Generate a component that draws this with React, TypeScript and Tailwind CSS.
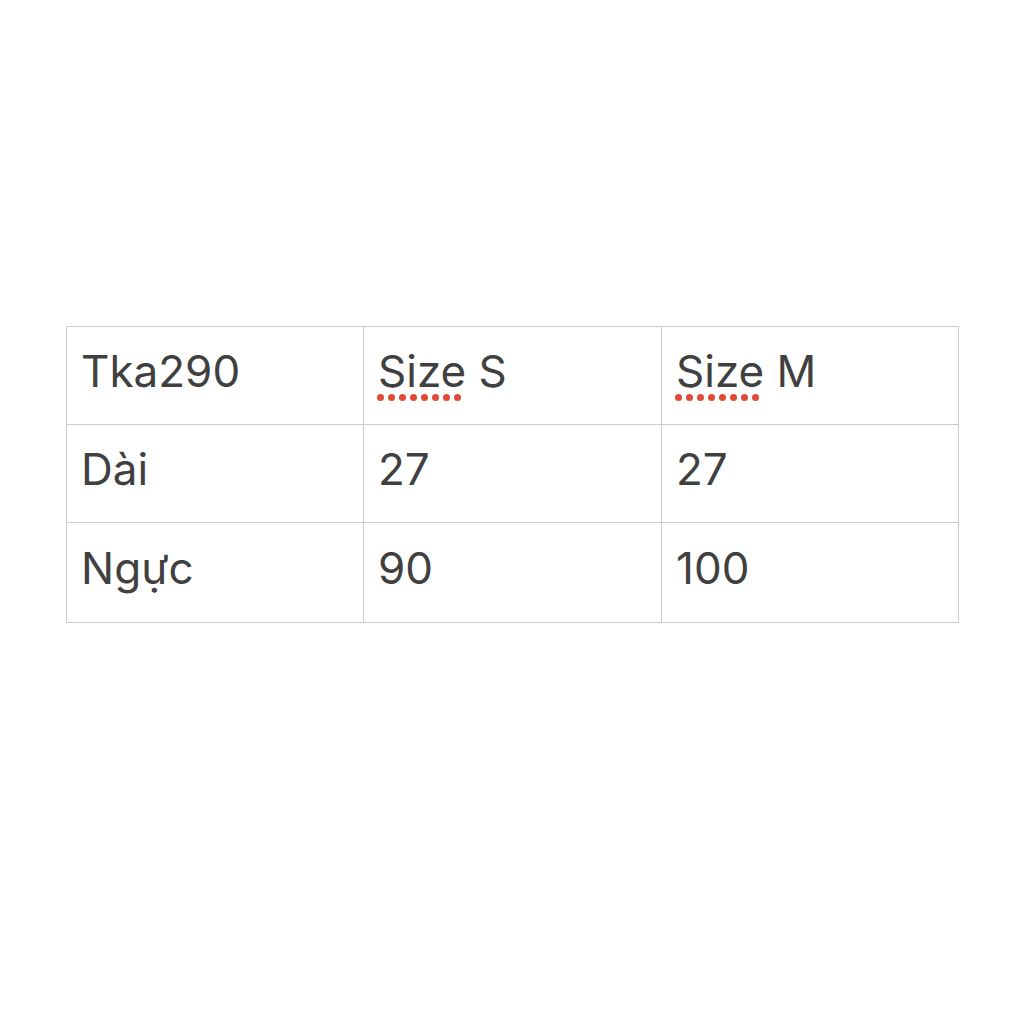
import React from "react";

function Spell({ children }: { children: React.ReactNode }) {
  return (
    <span className="relative inline-block">
      {children}
      <span className="absolute left-[-1px] top-[calc(100%+1px)] flex gap-[4px]">
        {Array.from({ length: 8 }).map((_, i) => (
          <span key={i} className="w-[7px] h-[7px] shrink-0 rounded-full bg-[#e04b38]" />
        ))}
      </span>
    </span>
  );
}

const rows: React.ReactNode[][] = [
  ["Tka290", <><Spell>Size</Spell> S</>, <><Spell>Size</Spell> M</>],
  ["Dài", "27", "27"],
  ["Ngực", "90", "100"],
];

export default function App() {
  return (
    <div className="w-[1024px] h-[1024px] bg-white pt-[326px] pl-[66px]" style={{ fontFamily: "Inter, 'Noto Sans', sans-serif" }}>
      <table className="border-collapse text-[#404040] text-[44px]">
        <tbody>
          {rows.map((r, i) => (
            <tr key={i} className={i === 2 ? "h-[100px]" : "h-[98px]"}>
              {r.map((c, j) => (
                <td key={j} className={`border border-[#cccccc] pl-[14px] pb-[10px] align-middle font-normal leading-none ${j === 1 ? "w-[298px]" : "w-[297px]"}`}>
                  {c}
                </td>
              ))}
            </tr>
          ))}
        </tbody>
      </table>
    </div>
  );
}
